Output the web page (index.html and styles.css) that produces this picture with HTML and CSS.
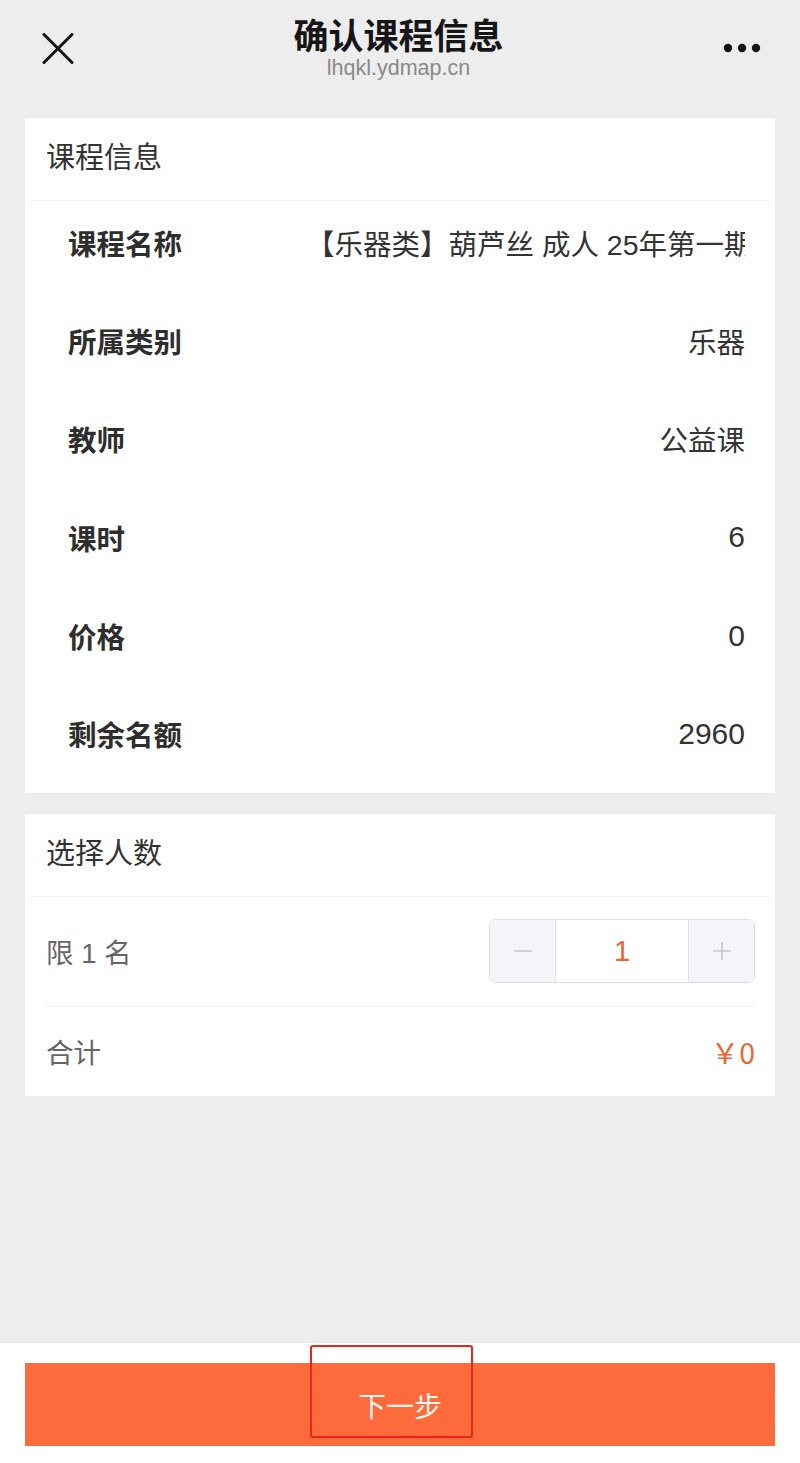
FILE: index.html
```html
<!DOCTYPE html>
<html lang="zh-CN">
<head>
<meta charset="utf-8">
<title>确认课程信息</title>
<link rel="stylesheet" href="styles.css">
</head>
<body>
<div class="page">
  <header class="nav">
    <div class="nav-left">
      <svg class="icon-close" width="32" height="31" viewBox="0 0 32 31" aria-hidden="true">
        <path d="M2 1.5 L30 29.5 M30 1.5 L2 29.5" stroke="#151515" stroke-width="3" stroke-linecap="round" fill="none"/>
      </svg>
    </div>
    <div class="nav-title">
      <div class="title">确认课程信息</div>
      <div class="url">lhqkl.ydmap.cn</div>
    </div>
    <div class="nav-right">
      <svg class="icon-more" width="38" height="10" viewBox="0 0 38 10" aria-hidden="true">
        <circle cx="5" cy="5" r="4.2" fill="#151515"/>
        <circle cx="19" cy="5" r="4.2" fill="#151515"/>
        <circle cx="33" cy="5" r="4.2" fill="#151515"/>
      </svg>
    </div>
  </header>

  <main class="content">
    <section class="card">
      <div class="card-head">课程信息</div>
      <div class="info-list">
        <div class="info-row">
          <span class="info-label">课程名称</span>
          <span class="info-value info-value-long">【乐器类】葫芦丝 成人 25年第一期（周六上午班）</span>
        </div>
        <div class="info-row">
          <span class="info-label">所属类别</span>
          <span class="info-value">乐器</span>
        </div>
        <div class="info-row">
          <span class="info-label">教师</span>
          <span class="info-value">公益课</span>
        </div>
        <div class="info-row">
          <span class="info-label">课时</span>
          <span class="info-value num">6</span>
        </div>
        <div class="info-row">
          <span class="info-label">价格</span>
          <span class="info-value num">0</span>
        </div>
        <div class="info-row">
          <span class="info-label">剩余名额</span>
          <span class="info-value num">2960</span>
        </div>
      </div>
    </section>

    <section class="card card-count">
      <div class="card-head">选择人数</div>
      <div class="count-body">
        <div class="count-row count-row-stepper">
          <span class="muted">限 1 名</span>
          <div class="stepper">
            <span class="step-btn">
              <svg width="20" height="20" viewBox="0 0 20 20" aria-hidden="true"><path d="M1 10 H19" stroke="#c4c6cc" stroke-width="1.6"/></svg>
            </span>
            <span class="step-value">1</span>
            <span class="step-btn">
              <svg width="20" height="20" viewBox="0 0 20 20" aria-hidden="true"><path d="M1 10 H19 M10 1 V19" stroke="#c4c6cc" stroke-width="1.6"/></svg>
            </span>
          </div>
        </div>
        <div class="count-row count-row-total">
          <span class="muted">合计</span>
          <span class="total">￥0</span>
        </div>
      </div>
    </section>
  </main>

  <footer class="bottom-bar">
    <button class="btn-next" type="button">下一步</button>
    <div class="annotation"></div>
  </footer>
</div>
</body>
</html>
```

FILE: styles.css
```css
* {
  box-sizing: border-box;
}

html, body {
  margin: 0;
  padding: 0;
}

body {
  background: #ededed;
  font-family: "Liberation Sans", "Noto Sans CJK SC", sans-serif;
  color: #333;
}

.page {
  width: 800px;
  min-height: 1463px;
  display: flex;
  flex-direction: column;
}

/* ---------- nav ---------- */
.nav {
  height: 118px;
  display: grid;
  grid-template-columns: 1fr auto 1fr;
  padding: 15px 39px 0 42px;
}

.nav-left {
  padding-top: 18px;
}

.icon-close {
  display: block;
}

.nav-title {
  text-align: center;
  margin-right: 6px;
}

.title {
  font-family: "Noto Sans CJK SC", sans-serif;
  font-size: 35px;
  line-height: 38px;
  font-weight: 700;
  color: #161616;
}

.url {
  margin-top: 4px;
  font-size: 21.5px;
  line-height: 22px;
  color: #8a8a8a;
}

.nav-right {
  display: flex;
  justify-content: flex-end;
  padding-top: 28px;
}

.icon-more {
  display: block;
}

/* ---------- cards ---------- */
.content {
  flex: 1;
  padding: 0 25px;
}

.card {
  background: #fff;
}

.card-count {
  margin-top: 21px;
}

.card-head {
  height: 83px;
  margin: 0 6px;
  padding-left: 15px;
  border-bottom: 1px solid #f2f2f2;
  font-size: 29px;
  line-height: 80px;
  color: #333;
}

.info-list {
  display: flex;
  flex-direction: column;
  gap: 12.4px;
  padding: 0 30px 14px 43px;
}

.info-row {
  height: 86px;
  padding-bottom: 4px;
  display: flex;
  align-items: center;
  justify-content: space-between;
  font-size: 28.5px;
}

.info-label {
  font-weight: 700;
  color: #2e2e2e;
  white-space: nowrap;
}

.info-value {
  color: #333;
  white-space: nowrap;
}

.info-value.num {
  font-size: 30px;
}

.info-value-long {
  width: 439px;
  overflow: hidden;
  text-overflow: clip;
}

/* ---------- count card ---------- */
.count-body {
  padding: 0 20px 0 21px;
}

.count-row {
  display: flex;
  align-items: center;
  justify-content: space-between;
  font-size: 27.5px;
}

.count-row-stepper {
  height: 110px;
  border-bottom: 1px solid #f0f0f0;
}

.count-row-total {
  height: 89px;
}

.muted {
  color: #666;
}

.total {
  font-family: "Noto Sans CJK SC", sans-serif;
  font-size: 28.5px;
  color: #e8683a;
}

.stepper {
  width: 266px;
  height: 64px;
  display: flex;
  border: 1px solid #dcdde0;
  border-radius: 7px;
  overflow: hidden;
}

.step-btn {
  width: 65px;
  display: flex;
  align-items: center;
  justify-content: center;
  background: #f4f5f8;
}

.step-value {
  flex: 1;
  display: flex;
  align-items: center;
  justify-content: center;
  background: #fff;
  border-left: 1px solid #e2e3e6;
  border-right: 1px solid #e2e3e6;
  color: #e0693d;
  font-size: 29px;
}

/* ---------- bottom bar ---------- */
.bottom-bar {
  position: relative;
  height: 120px;
  background: #fff;
  padding: 20px 25px 0;
}

.btn-next {
  display: block;
  width: 100%;
  height: 83px;
  border: none;
  border-radius: 0;
  background: #fd6a3b;
  color: #fff7ef;
  font-family: "Noto Sans CJK SC", sans-serif;
  font-size: 28px;
  padding: 0;
}

.annotation {
  position: absolute;
  left: 310px;
  top: 2px;
  width: 163px;
  height: 93px;
  border: 2px solid #e5281d;
  border-radius: 3px;
  pointer-events: none;
}
```
